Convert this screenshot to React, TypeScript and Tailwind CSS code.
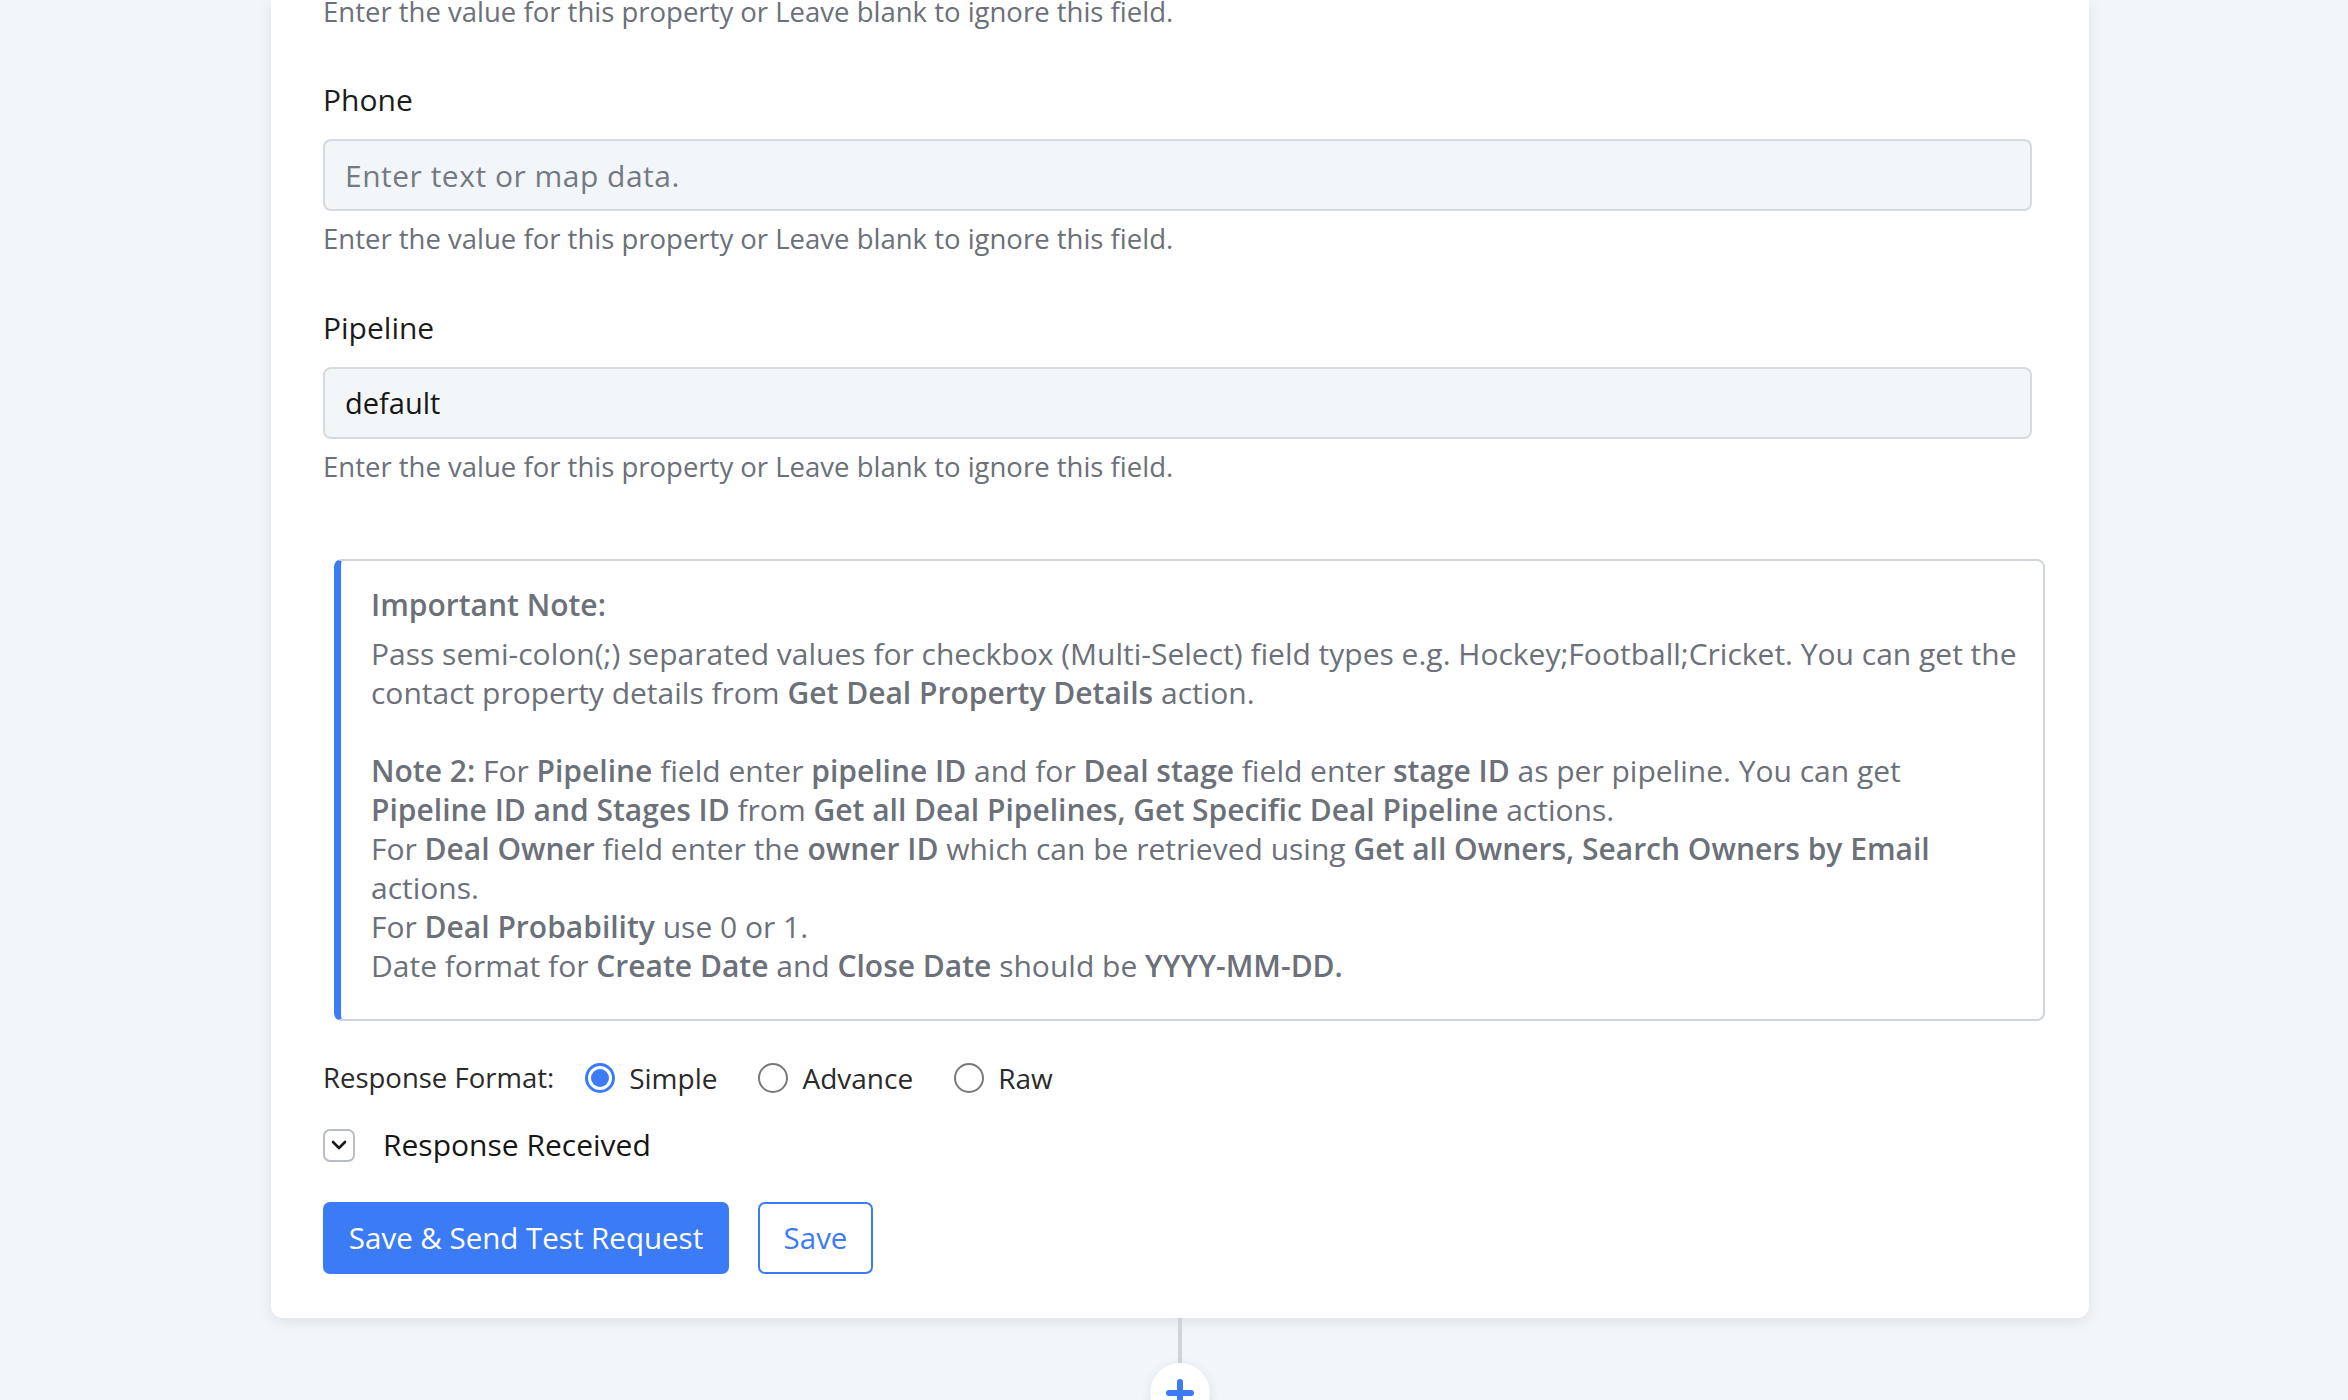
import { ChevronDown } from 'lucide-react';

const FONT = "font-['Open_Sans','Noto_Sans',sans-serif]";

function Field({ label, value, placeholder }: { label: string; value?: string; placeholder?: string }) {
  return (
    <div className="flex flex-col">
      <label className="text-[30px] leading-[36px] text-[#1c1c1c]">{label}</label>
      <div className="mt-[21px] flex h-[72px] items-center rounded-[8px] border-2 border-[#d5d9e0] bg-[#f3f6f9] px-[20px]">
        {value ? (
          <span className="text-[29px] text-[#161616]">{value}</span>
        ) : (
          <span className="text-[30px] tracking-[0.5px] text-[#737a84]">{placeholder}</span>
        )}
      </div>
      <p className="mt-[11px] text-[27.5px] leading-[34px] text-[#6b7079]">
        Enter the value for this property or Leave blank to ignore this field.
      </p>
    </div>
  );
}

function Radio({ label, checked }: { label: string; checked?: boolean }) {
  return (
    <label className="flex items-center gap-[14px]">
      {checked ? (
        <span className="flex h-[30px] w-[30px] items-center justify-center rounded-full border-[3px] border-[#3b7cf6] bg-white">
          <span className="h-[18px] w-[18px] rounded-full bg-[#3b7cf6]" />
        </span>
      ) : (
        <span className="h-[30px] w-[30px] rounded-full border-2 border-[#77797d] bg-white" />
      )}
      <span className="text-[28px] leading-[36px] text-[#2a2a2a]">{label}</span>
    </label>
  );
}

export default function App() {
  return (
    <div className={`${FONT} min-h-[1400px] overflow-hidden bg-[#f3f6f9]`}>
      <div className="ml-[271px] flex w-[1818px] flex-col items-center">
        {/* Card */}
        <div className="w-full rounded-b-[12px] bg-white pb-[44px] pl-[52px] pr-[57px] shadow-[0_4px_14px_rgba(30,40,70,0.10)]">
          <p className="-mt-[5px] text-[27.5px] leading-[34px] text-[#6b7079]">
            Enter the value for this property or Leave blank to ignore this field.
          </p>

          <div className="mt-[53px] flex flex-col gap-[54px]">
            <Field label="Phone" placeholder="Enter text or map data." />
            <Field label="Pipeline" value="default" />
          </div>

          {/* Important note */}
          <div className="mt-[75px] ml-[11px] -mr-[13px] whitespace-nowrap rounded-[8px] border-2 border-l-[7px] border-[#cfd4e0] border-l-[#3b7cf6] pb-[34px] pl-[30px] pr-[20px] pt-[24px] text-[30px] leading-[39px] text-[#6b7079]">
            <p className="font-semibold">Important Note:</p>
            <p className="mt-[10px]">
              Pass semi-colon(;) separated values for checkbox (Multi-Select) field types e.g. Hockey;Football;Cricket. You can get the
              <br />
              contact property details from <b className="font-semibold">Get Deal Property Details</b> action.
            </p>
            <p className="mt-[39px]">
              <b className="font-semibold">Note 2:</b> For <b className="font-semibold">Pipeline</b> field enter <b className="font-semibold">pipeline ID</b> and for <b className="font-semibold">Deal stage</b> field enter <b className="font-semibold">stage ID</b> as per pipeline. You can get
              <br />
              <b className="font-semibold">Pipeline ID and Stages ID</b> from <b className="font-semibold">Get all Deal Pipelines, Get Specific Deal Pipeline</b> actions.
              <br />
              For <b className="font-semibold">Deal Owner</b> field enter the <b className="font-semibold">owner ID</b> which can be retrieved using <b className="font-semibold">Get all Owners, Search Owners by Email</b>
              <br />
              actions.
              <br />
              For <b className="font-semibold">Deal Probability</b> use 0 or 1.
              <br />
              Date format for <b className="font-semibold">Create Date</b> and <b className="font-semibold">Close Date</b> should be <b className="font-semibold">YYYY-MM-DD.</b>
            </p>
          </div>

          {/* Response format */}
          <div className="mt-[39px] flex items-center">
            <span className="mr-[31px] text-[27.5px] leading-[36px] text-[#2a2a2a]">Response Format:</span>
            <div className="flex items-center gap-[41px]">
              <Radio label="Simple" checked />
              <Radio label="Advance" />
              <Radio label="Raw" />
            </div>
          </div>

          <div className="mt-[31px] flex items-center gap-[28px]">
            <span className="flex h-[33px] w-[32px] items-center justify-center rounded-[7px] border-2 border-[#b9bdc6] bg-white">
              <ChevronDown size={24} strokeWidth={2.6} className="text-[#1a1a1a]" />
            </span>
            <span className="text-[30px] leading-[36px] text-[#161616]">Response Received</span>
          </div>

          <div className="mt-[39px] flex items-center gap-[29px]">
            <button className="h-[72px] w-[406px] rounded-[7px] bg-[#3b7cf6] text-[29.5px] font-medium text-white">
              Save &amp; Send Test Request
            </button>
            <button className="h-[72px] w-[115px] rounded-[7px] border-2 border-[#3b7cf6] bg-white text-[29.5px] font-medium text-[#3b7cf6]">
              Save
            </button>
          </div>
        </div>

        {/* Connector */}
        <div className="h-[45px] w-[4px] bg-[#d0d4da]" />
        <div className="flex h-[60px] w-[60px] items-start justify-center rounded-full bg-white pt-[16px] shadow-[0_2px_10px_rgba(30,40,70,0.12)]">
          <svg width="28" height="28" viewBox="0 0 28 28">
            <path d="M14 3v22M3 14h22" stroke="#3b7cf6" strokeWidth="6" strokeLinecap="round" />
          </svg>
        </div>
      </div>
    </div>
  );
}
